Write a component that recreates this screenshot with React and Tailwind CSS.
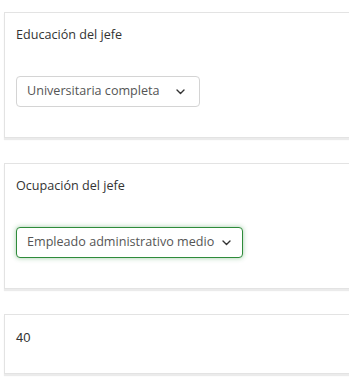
import { useState } from 'react'

function Chevron() {
  return (
    <svg width="9" height="6" viewBox="0 0 9 6" fill="none" className="shrink-0">
      <path d="M1 1l3.5 3.5L8 1" stroke="#333" strokeWidth="1.4" strokeLinecap="round" strokeLinejoin="round" />
    </svg>
  )
}

function SelectBox({ value, focused }) {
  return (
    <div
      className={
        focused
          ? 'inline-flex items-center h-[31px] pl-[10px] pr-[11px] gap-[8px] rounded-[4px] border border-[#2e8b3a] shadow-[0_0_5px_rgba(46,139,58,0.45)] bg-white'
          : 'inline-flex items-center h-[31px] pl-[10px] pr-[14px] gap-[16px] rounded-[4px] border border-[#d4d4d4] bg-white'
      }
    >
      <span className="text-[12.6px] text-[#555] font-['Open_Sans',sans-serif]">{value}</span>
      <Chevron />
    </div>
  )
}

function Card({ title, children }) {
  return (
    <div className="w-[360px] bg-white border border-[#e3e3e3] shadow-[0_2px_1px_rgba(0,0,0,0.08)] pt-[13px] pb-[30px] pl-[11px]">
      <div className="text-[12.6px] leading-[18px] text-[#333] font-['Open_Sans',sans-serif]">{title}</div>
      <div className="mt-[32px]">{children}</div>
    </div>
  )
}

function App() {
  const [edu] = useState('Universitaria completa')
  const [ocup] = useState('Empleado administrativo medio')

  return (
    <div className="w-[349px] h-[381px] overflow-hidden bg-white pt-[12px] pl-[4px] flex flex-col gap-[25px]">
      <Card title="Educación del jefe">
        <SelectBox value={edu} />
      </Card>

      <Card title="Ocupación del jefe">
        <SelectBox value={ocup} focused />
      </Card>

      <div className="w-[360px] bg-white border border-[#e3e3e3] shadow-[0_2px_1px_rgba(0,0,0,0.08)] pt-[14px] pb-[26px] pl-[11px]">
        <div className="text-[13px] leading-[18px] text-[#333] font-['Liberation_Sans',Arial,sans-serif]">40</div>
      </div>
    </div>
  )
}

export default App
